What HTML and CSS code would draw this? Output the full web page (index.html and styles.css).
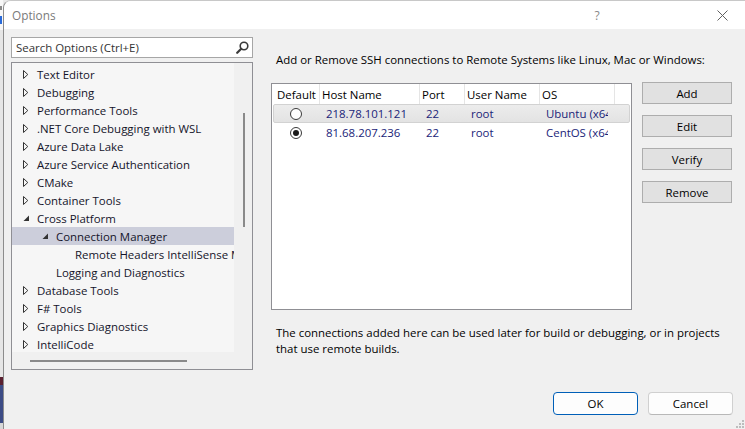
FILE: index.html
```html
<!DOCTYPE html>
<html>
<head>
<meta charset="utf-8">
<title>Options</title>
<link rel="stylesheet" href="styles.css">
</head>
<body>
<div class="screen">
  <div class="backdrop">
    <div class="bd-top"><span class="bd-e"></span><span class="bd-t"></span></div>
    <div class="bd-mid"></div>
    <div class="bd-r"></div>
    <div class="bd-blue"></div>
    <div class="bd-bot"></div>
  </div>
  <div class="dialog">
    <div class="titlebar">
      <span class="title">Options</span>
      <span class="cap help">?</span>
      <span class="cap close">
        <svg width="11" height="11" viewBox="0 0 11 11"><path d="M0.5 0.5 L10.5 10.5 M10.5 0.5 L0.5 10.5" stroke="#606060" stroke-width="1" fill="none"/></svg>
      </span>
    </div>
    <div class="body">
      <div class="left">
        <div class="search">
          <span class="ph">Search Options (Ctrl+E)</span>
          <svg class="mag" width="13" height="13" viewBox="0 0 13 13"><circle cx="8" cy="5" r="3.8" stroke="#3a3a3a" stroke-width="1.6" fill="none"/><path d="M5.2 7.8 L1.2 11.8" stroke="#3a3a3a" stroke-width="2.2" stroke-linecap="round"/></svg>
        </div>
        <div class="tree">
          <div class="tree-main">
            <div class="tree-list">
              <div class="node l0"><span class="exp"><svg width="6" height="9" viewBox="0 0 6 9"><path d="M0.5 0.5 L4.8 4.5 L0.5 8.5 Z" stroke="#333" fill="none"/></svg></span>Text Editor</div>
              <div class="node l0"><span class="exp"><svg width="6" height="9" viewBox="0 0 6 9"><path d="M0.5 0.5 L4.8 4.5 L0.5 8.5 Z" stroke="#333" fill="none"/></svg></span>Debugging</div>
              <div class="node l0"><span class="exp"><svg width="6" height="9" viewBox="0 0 6 9"><path d="M0.5 0.5 L4.8 4.5 L0.5 8.5 Z" stroke="#333" fill="none"/></svg></span>Performance Tools</div>
              <div class="node l0"><span class="exp"><svg width="6" height="9" viewBox="0 0 6 9"><path d="M0.5 0.5 L4.8 4.5 L0.5 8.5 Z" stroke="#333" fill="none"/></svg></span>.NET Core Debugging with WSL</div>
              <div class="node l0"><span class="exp"><svg width="6" height="9" viewBox="0 0 6 9"><path d="M0.5 0.5 L4.8 4.5 L0.5 8.5 Z" stroke="#333" fill="none"/></svg></span>Azure Data Lake</div>
              <div class="node l0"><span class="exp"><svg width="6" height="9" viewBox="0 0 6 9"><path d="M0.5 0.5 L4.8 4.5 L0.5 8.5 Z" stroke="#333" fill="none"/></svg></span>Azure Service Authentication</div>
              <div class="node l0"><span class="exp"><svg width="6" height="9" viewBox="0 0 6 9"><path d="M0.5 0.5 L4.8 4.5 L0.5 8.5 Z" stroke="#333" fill="none"/></svg></span>CMake</div>
              <div class="node l0"><span class="exp"><svg width="6" height="9" viewBox="0 0 6 9"><path d="M0.5 0.5 L4.8 4.5 L0.5 8.5 Z" stroke="#333" fill="none"/></svg></span>Container Tools</div>
              <div class="node l0"><span class="exp"><svg width="7" height="7" viewBox="0 0 7 7"><path d="M6 0.5 L6 6 L0.5 6 Z" fill="#333"/></svg></span>Cross Platform</div>
              <div class="node l1 selected"><span class="exp"><svg width="7" height="7" viewBox="0 0 7 7"><path d="M6 0.5 L6 6 L0.5 6 Z" fill="#333"/></svg></span>Connection Manager</div>
              <div class="node l2"><span class="exp"></span>Remote Headers IntelliSense Manager</div>
              <div class="node l1"><span class="exp"></span>Logging and Diagnostics</div>
              <div class="node l0"><span class="exp"><svg width="6" height="9" viewBox="0 0 6 9"><path d="M0.5 0.5 L4.8 4.5 L0.5 8.5 Z" stroke="#333" fill="none"/></svg></span>Database Tools</div>
              <div class="node l0"><span class="exp"><svg width="6" height="9" viewBox="0 0 6 9"><path d="M0.5 0.5 L4.8 4.5 L0.5 8.5 Z" stroke="#333" fill="none"/></svg></span>F# Tools</div>
              <div class="node l0"><span class="exp"><svg width="6" height="9" viewBox="0 0 6 9"><path d="M0.5 0.5 L4.8 4.5 L0.5 8.5 Z" stroke="#333" fill="none"/></svg></span>Graphics Diagnostics</div>
              <div class="node l0"><span class="exp"><svg width="6" height="9" viewBox="0 0 6 9"><path d="M0.5 0.5 L4.8 4.5 L0.5 8.5 Z" stroke="#333" fill="none"/></svg></span>IntelliCode</div>
            </div>
            <div class="vscroll"><div class="vthumb"></div></div>
          </div>
          <div class="hscroll"><div class="hthumb"></div></div>
        </div>
      </div>
      <div class="right">
        <p class="desc">Add or Remove SSH connections to Remote Systems like Linux, Mac or Windows:</p>
        <div class="conn">
          <div class="listview">
            <div class="lv-head">
              <div class="col c-def hd">Default</div>
              <div class="col c-host hd">Host Name</div>
              <div class="col c-port hd">Port</div>
              <div class="col c-user hd">User Name</div>
              <div class="col c-os hd">OS</div>
            </div>
            <div class="lv-row hot">
              <div class="cell c-def"><span class="radio"></span></div>
              <div class="cell c-host">218.78.101.121</div>
              <div class="cell c-port">22</div>
              <div class="cell c-user">root</div>
              <div class="cell c-os">Ubuntu (x64)</div>
            </div>
            <div class="lv-row">
              <div class="cell c-def"><span class="radio on"></span></div>
              <div class="cell c-host">81.68.207.236</div>
              <div class="cell c-port">22</div>
              <div class="cell c-user">root</div>
              <div class="cell c-os">CentOS (x64)</div>
            </div>
          </div>
          <div class="side-btns">
            <button class="sbtn">Add</button>
            <button class="sbtn">Edit</button>
            <button class="sbtn">Verify</button>
            <button class="sbtn">Remove</button>
          </div>
        </div>
        <p class="note">The connections added here can be used later for build or debugging, or in projects that use remote builds.</p>
        <div class="footer">
          <button class="btn ok">OK</button>
          <button class="btn cancel">Cancel</button>
        </div>
      </div>
    </div>
    <svg class="grip" width="10" height="10" viewBox="0 0 10 10">
      <rect x="7" y="1" width="2" height="2" fill="#bdbdbd"/>
      <rect x="4" y="4" width="2" height="2" fill="#bdbdbd"/>
      <rect x="7" y="4" width="2" height="2" fill="#bdbdbd"/>
      <rect x="1" y="7" width="2" height="2" fill="#bdbdbd"/>
      <rect x="4" y="7" width="2" height="2" fill="#bdbdbd"/>
      <rect x="7" y="7" width="2" height="2" fill="#bdbdbd"/>
    </svg>
  </div>
</div>
</body>
</html>
```

FILE: styles.css
```css
* { box-sizing: border-box; }
html, body {
  margin: 0;
  padding: 0;
}
body {
  width: 745px;
  height: 429px;
  overflow: hidden;
  font-family: "Open Sans", "Noto Sans", "DejaVu Sans", sans-serif;
  font-size: 11.45px;
  color: #000;
  background: #e8e8e8;
}
.screen {
  display: flex;
  width: 745px;
  height: 429px;
}
.backdrop {
  width: 3px;
  flex: none;
  display: flex;
  flex-direction: column;
}
.bd-top {
  height: 30px;
  background: #f7f7f7;
  display: flex;
  flex-direction: column;
  padding-top: 6px;
  gap: 6px;
}
.bd-e { height: 4px; background: #8a8a8a; width: 2px; }
.bd-t { height: 8px; background: #2a6ad8; width: 2px; }
.bd-mid { height: 347px; background: #e6e6e6; }
.bd-r { height: 8px; background: #5a2030; }
.bd-blue { height: 38px; background: #3d4c86; }
.bd-bot { flex: 1; background: #d8d8d8; }

.dialog {
  position: relative;
  flex: 1;
  display: flex;
  flex-direction: column;
  background: #f0f0f0;
  border-left: 1px solid #8c8c8c;
  border-top: 1px solid #c8c8c8;
  border-top-left-radius: 8px;
  overflow: hidden;
}
.titlebar {
  height: 28px;
  flex: none;
  background: #fff;
  display: flex;
  align-items: center;
}
.title {
  padding-left: 8px;
  font-size: 11.8px;
  color: #7a7a7a;
  flex: 1;
}
.cap {
  width: 46px;
  height: 28px;
  display: flex;
  align-items: center;
  justify-content: center;
}
.help {
  font-size: 12px;
  color: #888;
  margin-right: 79px;
}
.close svg { display: block; }

.body {
  flex: 1;
  display: flex;
  padding-left: 7px;
}
.left {
  width: 242px;
  flex: none;
  padding-top: 8px;
  display: flex;
  flex-direction: column;
  gap: 4px;
}
.search {
  height: 21px;
  background: #fff;
  border: 1px solid #a6a6a6;
  display: flex;
  align-items: center;
  padding-left: 4px;
  padding-right: 3px;
}
.ph {
  flex: 1;
  color: #333;
  white-space: nowrap;
}
.mag { display: block; }

.tree {
  height: 308px;
  border: 1px solid #8f8f94;
  display: flex;
  flex-direction: column;
  background: #f0f0f0;
}
.tree-main {
  flex: 1;
  display: flex;
  min-height: 0;
}
.tree-list {
  width: 222px;
  flex: none;
  background: #f6f6f6;
  padding-top: 2px;
  overflow: hidden;
  white-space: nowrap;
}
.node {
  height: 18px;
  display: flex;
  align-items: center;
  color: #14142a;
}
.node.l0 { padding-left: 11px; }
.node.l1 { padding-left: 30px; }
.node.l2 { padding-left: 49px; }
.node.selected { background: #cccedb; }
.exp {
  width: 14px;
  flex: none;
  display: flex;
  align-items: center;
}
.exp svg { display: block; }
.vscroll {
  flex: 1;
  position: relative;
  display: flex;
  justify-content: center;
  padding-top: 50px;
  padding-left: 1px;
}
.vthumb {
  width: 2px;
  height: 114px;
  background: #8a8a8a;
}
.hscroll {
  height: 17px;
  flex: none;
  display: flex;
  align-items: center;
  padding-left: 18px;
}
.hthumb {
  width: 157px;
  height: 2px;
  background: #8a8a8a;
}

.right {
  width: 462px;
  flex: none;
  margin-left: 18px;
  display: flex;
  flex-direction: column;
}
.desc {
  margin: 23px 0 0 5px;
  line-height: 16px;
  white-space: nowrap;
}
.conn {
  margin-top: 15px;
  display: flex;
  gap: 10px;
}
.listview {
  width: 361px;
  height: 227px;
  flex: none;
  background: #fff;
  border: 1px solid #8f8f94;
}
.lv-head {
  height: 20px;
  display: flex;
}
.col {
  height: 20px;
  display: flex;
  align-items: center;
  border-right: 1px solid #e5e5e5;
  padding-left: 2px;
  white-space: nowrap;
  overflow: hidden;
}
.col.c-def { padding-left: 5px; }
.c-def { width: 48px; flex: none; }
.c-host { width: 100px; flex: none; }
.c-port { width: 45px; flex: none; }
.c-user { width: 75px; flex: none; }
.c-os { width: 75px; flex: none; }
.lv-row {
  height: 19px;
  margin: 0 1px;
  display: flex;
  align-items: center;
  border: 1px solid transparent;
}
.lv-row.hot {
  background: linear-gradient(#ececec, #e3e3e3);
  border-color: #d2d2d2;
  border-radius: 2px;
}
.cell {
  height: 17px;
  display: flex;
  align-items: center;
  padding-left: 6px;
  white-space: nowrap;
  overflow: hidden;
  color: #1a2478;
}
.lv-row .c-def { width: 46px; justify-content: center; padding-left: 0; padding-right: 2px; }
.lv-row .c-host { padding-left: 6px; }
.lv-row .c-os { width: 68px; }
.radio {
  width: 12px;
  height: 12px;
  border-radius: 50%;
  border: 1px solid #3a3a3a;
  background: #fff;
  display: flex;
  align-items: center;
  justify-content: center;
}
.radio.on::after {
  content: "";
  width: 6px;
  height: 6px;
  border-radius: 50%;
  background: #1a1a1a;
}
.side-btns {
  display: flex;
  flex-direction: column;
  gap: 11px;
  margin-top: -1px;
}
.sbtn {
  width: 90px;
  height: 22px;
  background: #e1e1e1;
  border: 1px solid #adadad;
  font-family: inherit;
  font-size: 11.45px;
  color: #000;
  padding: 0;
}
.note {
  margin: 15px 0 0 5px;
  line-height: 16px;
  width: 455px;
}
.footer {
  margin-top: 35px;
  display: flex;
  justify-content: flex-end;
  gap: 10px;
}
.btn {
  width: 85px;
  height: 23px;
  border-radius: 4px;
  background: #fdfdfd;
  font-family: inherit;
  font-size: 11.45px;
  color: #000;
  padding: 0;
}
.btn.ok { border: 1px solid #005fb8; }
.btn.cancel { border: 1px solid #d0d0d0; border-bottom-color: #b8b8b8; }
.grip {
  position: absolute;
  right: 0;
  bottom: 0;
}
```
